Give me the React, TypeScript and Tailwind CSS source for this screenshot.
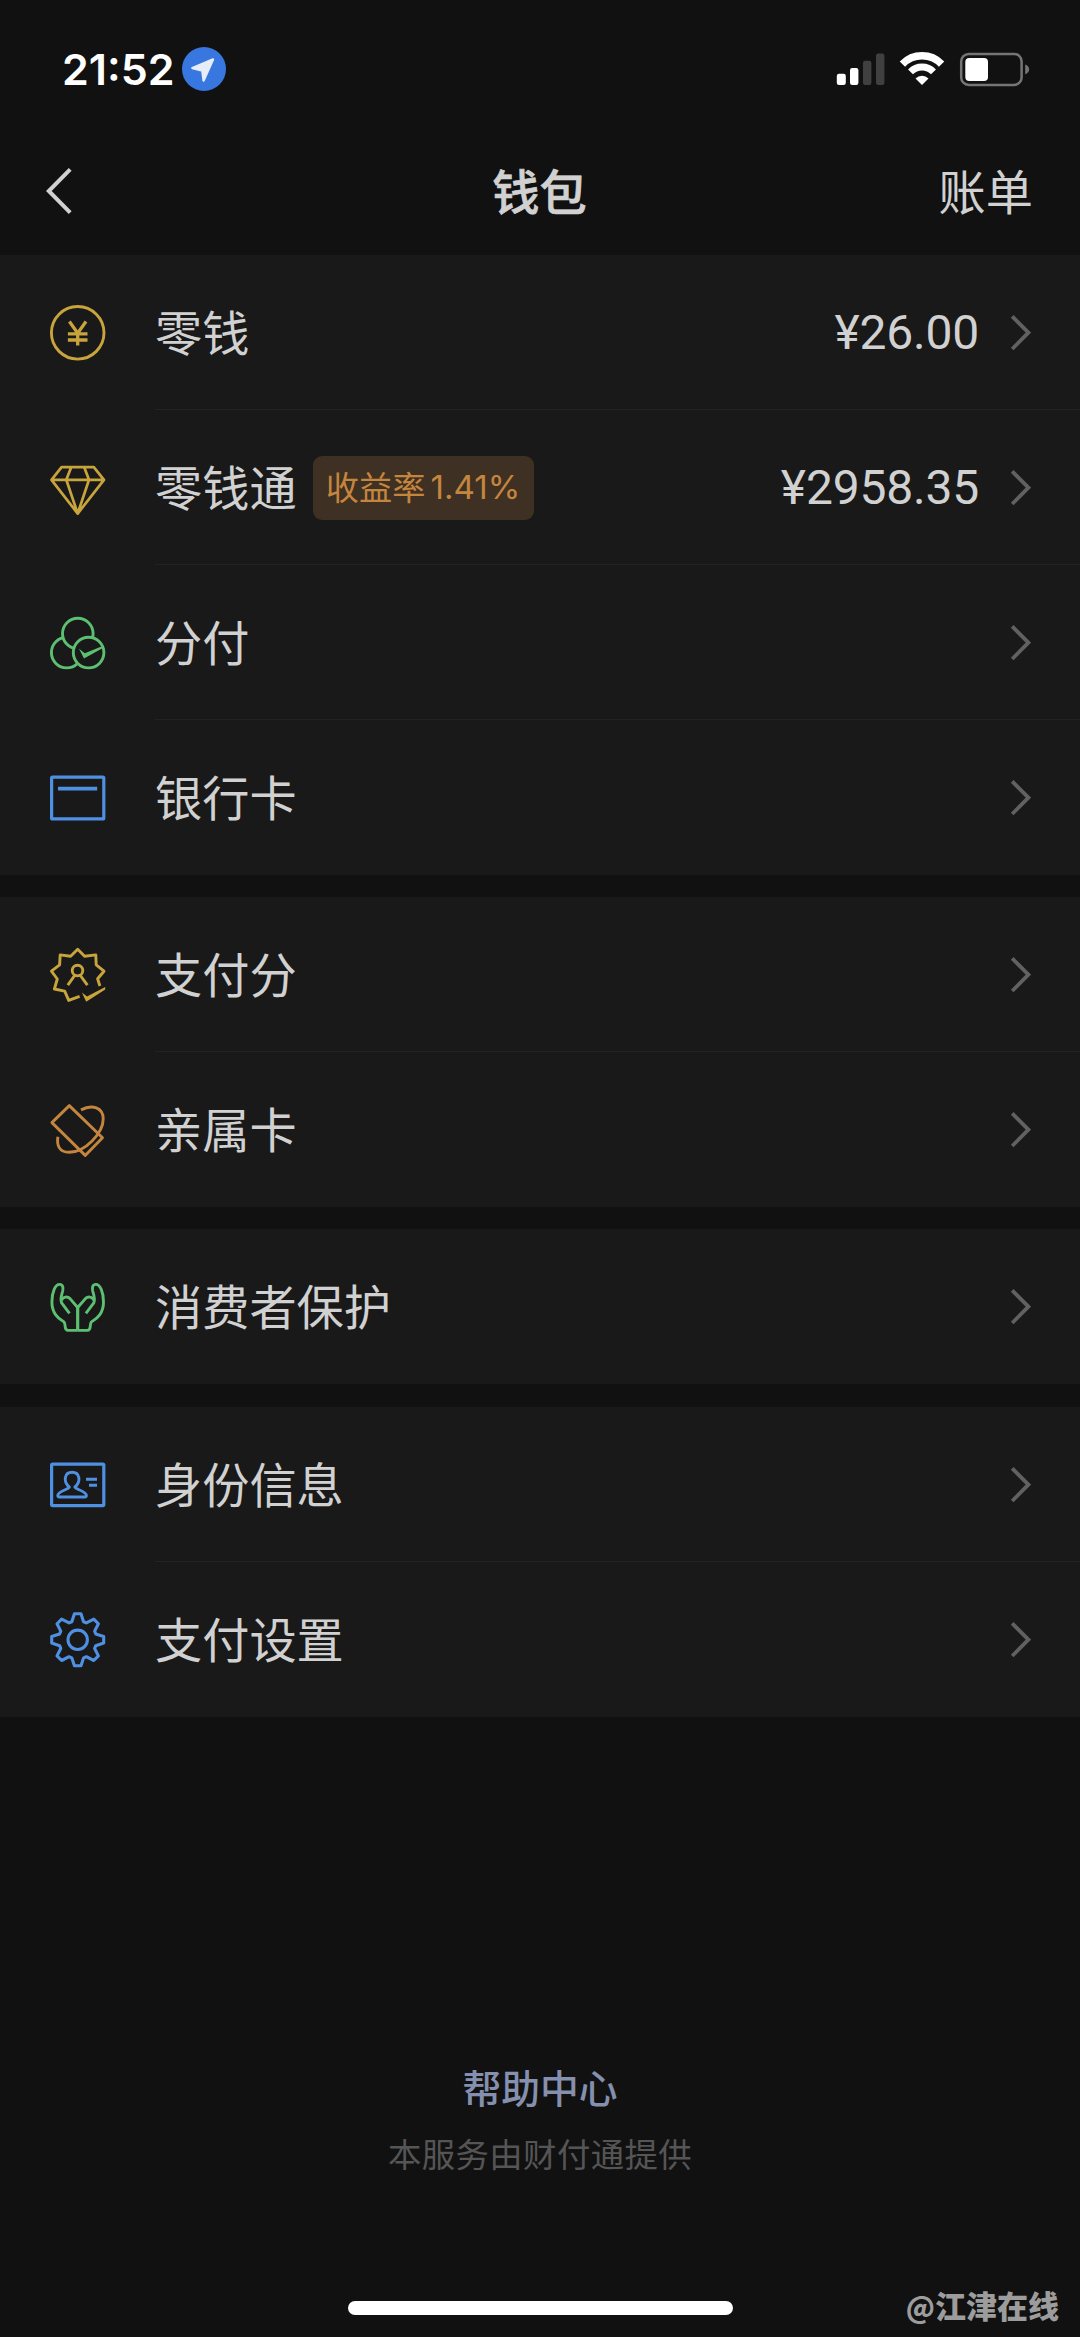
import type { ReactNode } from "react";

const GOLD = "#c8a43c";
const ORANGE = "#c4853f";
const GREEN = "#5dbf72";
const BLUE = "#4f90e3";

function Icon({ color, children }: { color: string; children: ReactNode }) {
  return (
    <svg
      width="62"
      height="62"
      viewBox="0 0 62 62"
      fill="none"
      stroke={color}
      strokeWidth="2.9"
      strokeLinejoin="round"
      className="block shrink-0"
    >
      {children}
    </svg>
  );
}

const CoinIcon = () => (
  <Icon color={GOLD}>
    <circle cx="30.7" cy="30.8" r="26.3" />
    <path d="M22.4 19.5 30.7 31.2 39 19.5M20.9 31.8H40.5M20.9 38H40.5M30.7 31V43.6" strokeWidth="3.3" strokeLinejoin="miter" />
  </Icon>
);

const DiamondIcon = () => (
  <Icon color={GOLD}>
    <path d="M14.6 10.2H46.8L57 22.8 30.7 56.6 4.5 22.8ZM4.5 22.8H57M24.2 10.2 19.3 22.8 30.7 56.6 42 22.8 37.2 10.2" strokeWidth="2.7" />
  </Icon>
);

const CirclesIcon = () => (
  <Icon color={GREEN}>
    <circle cx="19.7" cy="40.6" r="15.3" fill="#191919" />
    <circle cx="30.8" cy="21.5" r="15.3" fill="#191919" />
    <circle cx="41.6" cy="40.6" r="15.3" fill="#191919" />
    <path d="M32 36.8 37.8 41.2 55 34.2V36.4L37 46.6Z" fill={GREEN} stroke="none" />
  </Icon>
);

const CardIcon = () => (
  <Icon color={BLUE}>
    <rect x="4.6" y="10.1" width="52.2" height="41.8" rx="1" strokeWidth="3.2" />
    <path d="M11 21.6H50.2" strokeWidth="3.7" />
  </Icon>
);

const ScoreIcon = () => (
  <Icon color={GOLD}>
    <path d="M32.6 52.4 21.7 56.4 17.7 47.2 7.4 45 10.3 35 4.4 27.2 12.6 20.8 13.2 10.9 23.6 12.3 30.7 5.2 37.6 12.3 48.8 10.9 49.2 20.8 57 27.2 50.6 34.8 52.9 42" strokeWidth="2.9" />
    <path d="M34.9 48.4 40 52.4 58.2 43V45.6L39.2 57.8Z" fill={GOLD} stroke="none" />
    <circle cx="30.5" cy="26.6" r="5.3" />
    <path d="M28 31 20.8 41.2M33 31 40.4 41.2" />
  </Icon>
);

const FamilyCardIcon = () => (
  <Icon color={ORANGE}>
    <path d="M22.3 6.6 4.9 23.6 38.2 56.4 55.5 38.8Z" />
    <path d="M34 10.9C45 5.2 56.2 8.2 56.2 20 56.2 34 38 53.3 22 53.3 12 53.3 9.6 46 10.9 37.8" />
  </Icon>
);

const HandPath = () => (
  <>
    <path d="M30.7 54.4H21C16.6 54.4 19.2 48.2 17 46 13.6 43.2 4.9 39.5 4.9 26 4.9 16 8.4 8.4 12.5 8.4 16 8.4 16.4 12 15.7 15 14.8 18.5 12.9 23 14.6 26.9L22.5 37.4" />
    <path d="M14.5 24.2C16 20.2 20.8 20.4 23 22.6L30.7 31.5V54.4" />
  </>
);

const HandsIcon = () => (
  <Icon color={GREEN}>
    <HandPath />
    <g transform="translate(61.4 0) scale(-1 1)">
      <HandPath />
    </g>
  </Icon>
);

const IdIcon = () => (
  <Icon color={BLUE}>
    <rect x="4.6" y="10.1" width="52.2" height="41.5" rx="1" strokeWidth="3.2" />
    <path d="M22.4 33.2C15.6 27.4 17.6 18.2 25.1 18.2S34.6 27.4 27.8 33.2C28 35 39.4 37.4 39.4 41.2 39.4 42.6 38.8 43 37.6 43H12.6C11.4 43 10.8 42.6 10.8 41.2 10.8 37.4 22.2 35 22.4 33.2Z" />
    <path d="M39 25.2H50M42 31.2H50" />
  </Icon>
);

const gearPoints = Array.from({ length: 8 }, (_, k) =>
  [
    [19, -18],
    [26.2, -7.2],
    [26.2, 7.2],
    [19, 18],
  ]
    .map(([r, a]) => {
      const t = ((k * 45 + a - 90) * Math.PI) / 180;
      return `${(30.7 + r * Math.cos(t)).toFixed(2)},${(30.8 + r * Math.sin(t)).toFixed(2)}`;
    })
    .join(" "),
).join(" ");

const GearIcon = () => (
  <Icon color={BLUE}>
    <polygon points={gearPoints} strokeWidth="3.1" />
    <circle cx="30.7" cy="30.8" r="9.7" strokeWidth="3.1" />
  </Icon>
);

function Chevron() {
  return (
    <svg width="22" height="38" viewBox="0 0 22 38" fill="none" stroke="#616161" strokeWidth="3.8" className="block shrink-0">
      <path d="M3.2 2.4 19.4 18.7 3.2 35" />
    </svg>
  );
}

type RowData = { icon: ReactNode; label: string; tag?: ReactNode; value?: string };

function Row({ row, first }: { row: RowData; first: boolean }) {
  return (
    <div className="flex h-[155px]">
      <div className="flex w-[155px] shrink-0 items-center pl-[47px]">{row.icon}</div>
      <div
        className={`flex flex-1 items-center pr-[49px] ${first ? "" : "shadow-[0_-1px_0_0_#232323]"}`}
      >
        <span className="pb-[3px] text-[47.2px] leading-[60px] whitespace-nowrap">{row.label}</span>
        {row.tag}
        <span className="mr-[30px] ml-auto font-[Roboto] text-[48px] leading-[60px] tracking-[-0.2px]">{row.value}</span>
        <Chevron />
      </div>
    </div>
  );
}

const sections: RowData[][] = [
  [
    { icon: <CoinIcon />, label: "零钱", value: "¥26.00" },
    {
      icon: <DiamondIcon />,
      label: "零钱通",
      value: "¥2958.35",
      tag: (
        <span className="ml-[16px] flex h-[64px] w-[221px] items-center justify-center rounded-[9px] bg-[#3e3022] pb-[3px] text-[33.2px] leading-none whitespace-nowrap text-[#c4853f]">
          收益率<span className="ml-[5px] pt-[3px] font-[Inter]">1.41%</span>
        </span>
      ),
    },
    { icon: <CirclesIcon />, label: "分付" },
    { icon: <CardIcon />, label: "银行卡" },
  ],
  [
    { icon: <ScoreIcon />, label: "支付分" },
    { icon: <FamilyCardIcon />, label: "亲属卡" },
  ],
  [{ icon: <HandsIcon />, label: "消费者保护" }],
  [
    { icon: <IdIcon />, label: "身份信息" },
    { icon: <GearIcon />, label: "支付设置" },
  ],
];

function StatusBar() {
  return (
    <div className="flex h-[137px] items-center pr-[50px] pl-[62px]">
      <span className="w-[114px] font-[Inter] text-[43px] leading-[44px] font-semibold whitespace-nowrap text-white">21:52</span>
      <svg width="44" height="44" viewBox="0 0 44 44" className="ml-[6px] block">
        <circle cx="22" cy="22" r="22" fill="#3877df" />
        <path d="M10.4 21 31 12.4 21.6 33.6 20.3 23.6Z" fill="#e6edf8" stroke="#e6edf8" strokeWidth="2.4" strokeLinejoin="round" />
      </svg>
      <svg width="194" height="36" viewBox="836 50 194 36" className="ml-auto block">
        <rect x="836.8" y="72.7" width="9" height="11.3" rx="2.2" fill="#fff" />
        <rect x="850" y="67" width="8.4" height="17" rx="2.2" fill="#fff" />
        <rect x="863" y="59.8" width="8.4" height="24.2" rx="2.2" fill="#404040" />
        <rect x="876" y="52.6" width="8.4" height="31.4" rx="2.2" fill="#404040" />
        <g transform="translate(899.8 51)" stroke="#fff" fill="none">
          <path d="M2.6 12.1A27.2 27.2 0 0 1 41.8 12.1" strokeWidth="7.4" />
          <path d="M10.7 19.9A16 16 0 0 1 33.7 19.9" strokeWidth="6.8" />
          <path d="M22.2 33 15.7 26.4A9.2 9.2 0 0 1 28.7 26.4Z" fill="#fff" stroke="none" />
        </g>
        <rect x="961.2" y="52.9" width="60.4" height="31" rx="7.5" fill="none" stroke="#757575" strokeWidth="2.5" />
        <rect x="965.3" y="57" width="22.7" height="23" rx="4" fill="#fff" />
        <path d="M1025.2 63.6C1030.4 65.4 1030.4 71.4 1025.2 73.2Z" fill="#757575" />
      </svg>
    </div>
  );
}

export default function App() {
  return (
    <div className="relative flex h-[2337px] w-[1080px] flex-col overflow-hidden bg-[#111111] font-['Noto_Sans_CJK_SC',sans-serif] text-[#d1d1d1]">
      <StatusBar />
      <header className="grid h-[118px] grid-cols-3 items-center pr-[47px] pb-[10px] pl-[46px] text-[47.2px] leading-[60px]">
        <svg width="28" height="50" viewBox="0 0 28 50" fill="none" stroke="#d1d1d1" strokeWidth="4" className="block">
          <path d="M24.2 3.4 2.8 25 24.2 46.6" />
        </svg>
        <h1 className="pb-[3px] text-center font-medium [-webkit-text-stroke:0.7px_#d1d1d1]">钱包</h1>
        <span className="pb-[3px] text-right">账单</span>
      </header>

      <main className="flex flex-col gap-[22px]">
        {sections.map((rows, i) => (
          <section key={i} className={`bg-[#191919] ${i === 3 ? "mt-px" : ""}`}>
            {rows.map((row, j) => (
              <Row key={row.label} row={row} first={j === 0} />
            ))}
          </section>
        ))}
      </main>

      <footer className="mt-auto flex h-[281px] flex-col items-center whitespace-nowrap">
        <a className="text-[38.8px] leading-[60px] font-medium text-[#8490ad]">帮助中心</a>
        <p className="mt-[9px] text-[33.4px] leading-[56px] tracking-[0.4px] text-[#555555]">本服务由财付通提供</p>
        <div className="mt-[120px] h-[14px] w-[385px] rounded-full bg-white" />
      </footer>

      <div className="absolute right-[21px] bottom-[11px] text-[31px] leading-[40px] font-black text-[#9c9c9c]">
        <span className="text-[28px]">@</span>江津在线
      </div>
    </div>
  );
}
